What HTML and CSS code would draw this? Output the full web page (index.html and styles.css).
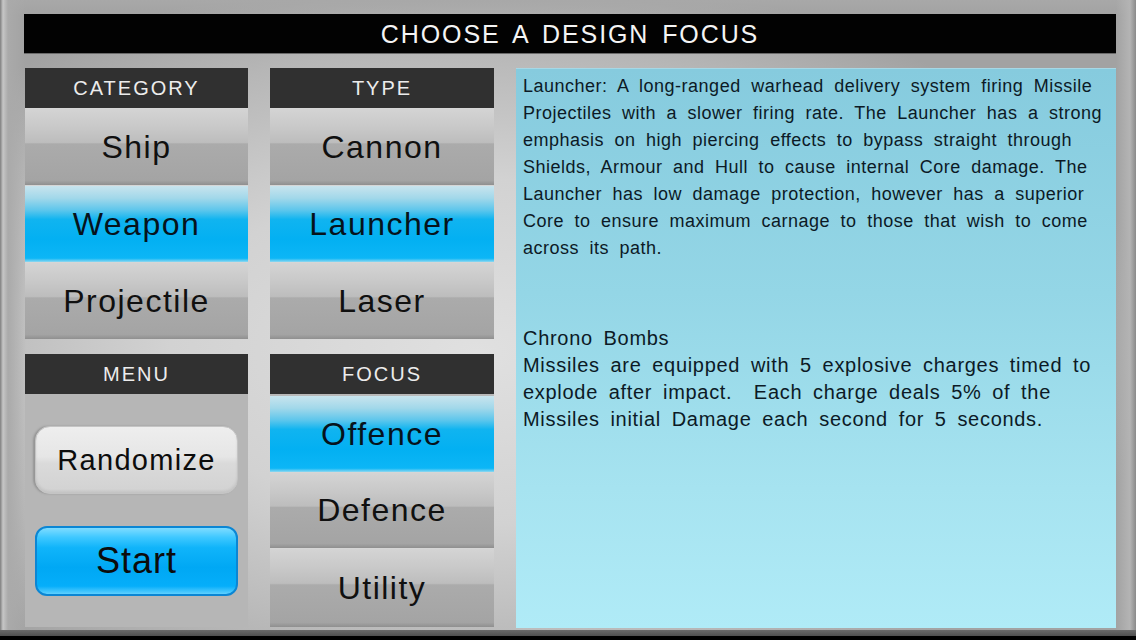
FILE: index.html
```html
<!DOCTYPE html>
<html>
<head>
<meta charset="utf-8">
<link rel="stylesheet" href="styles.css">
</head>
<body>
<div class="screen">
  <div class="title">CHOOSE A DESIGN FOCUS</div>
  <div class="main">
    <div class="panel top-left">
      <div class="head">CATEGORY</div>
      <div class="item">Ship</div>
      <div class="item sel">Weapon</div>
      <div class="item">Projectile</div>
    </div>
    <div class="panel top-mid">
      <div class="head">TYPE</div>
      <div class="item">Cannon</div>
      <div class="item sel">Launcher</div>
      <div class="item">Laser</div>
    </div>
    <div class="desc">
      <div class="para first">
        <div class="ln">Launcher: A long-ranged warhead delivery system firing Missile</div>
        <div class="ln">Projectiles with a slower firing rate. The Launcher has a strong</div>
        <div class="ln">emphasis on high piercing effects to bypass straight through</div>
        <div class="ln">Shields, Armour and Hull to cause internal Core damage. The</div>
        <div class="ln">Launcher has low damage protection, however has a superior</div>
        <div class="ln">Core to ensure maximum carnage to those that wish to come</div>
        <div class="ln">across its path.</div>
      </div>
      <div class="para second">
        <div class="ln">Chrono Bombs</div>
        <div class="ln">Missiles are equipped with 5 explosive charges timed to</div>
        <div class="ln">explode after impact.&nbsp; Each charge deals 5% of the</div>
        <div class="ln">Missiles initial Damage each second for 5 seconds.</div>
      </div>
    </div>
    <div class="panel menu">
      <div class="head">MENU</div>
      <div class="menu-body">
        <div class="btn rand">Randomize</div>
        <div class="btn start">Start</div>
      </div>
    </div>
    <div class="panel focus">
      <div class="head">FOCUS</div>
      <div class="focus-list">
        <div class="item sel">Offence</div>
        <div class="item">Defence</div>
        <div class="item">Utility</div>
      </div>
    </div>
  </div>
  <div class="footer"></div>
</div>
</body>
</html>
```
FILE: styles.css
```css
html, body {
  margin: 0;
  padding: 0;
}
body {
  width: 1136px;
  height: 640px;
  overflow: hidden;
  font-family: "Liberation Sans", Arial, sans-serif;
}
.screen {
  width: 1136px;
  height: 640px;
  box-sizing: border-box;
  padding: 14px 20px 0 24px;
  display: flex;
  flex-direction: column;
  background:
    linear-gradient(to right, #7e7e7e 0, #c6c6c6 3px, #aaaaaa 8px, rgba(168,168,168,0) 26px),
    linear-gradient(to left, #8a8a8a 0, #b4b4b4 6px, rgba(170,170,170,0) 20px),
    linear-gradient(to bottom, #a8a8a8 0, rgba(168,168,168,0) 16px),
    radial-gradient(ellipse 60% 60% at 42% 55%, #e0e0e0 0%, #d2d2d2 45%, #b6b6b6 80%, #a2a2a2 100%);
}
.title {
  height: 39px;
  background: #020202;
  color: #f4f4f4;
  font-size: 25px;
  letter-spacing: 1.9px;
  word-spacing: 4px;
  display: flex;
  align-items: center;
  justify-content: center;
  padding-top: 2px;
  box-sizing: border-box;
  box-shadow: 0 1px 0 #6a6a6a;
}
.main {
  margin-top: 15px;
  margin-left: 1px;
  display: grid;
  grid-template-columns: 223px 224px 600px;
  grid-template-rows: 271px 273px;
  column-gap: 22px;
  row-gap: 15px;
}
.panel {
  display: flex;
  flex-direction: column;
}
.head {
  height: 40px;
  flex: none;
  background: #303030;
  color: #ececec;
  font-size: 20px;
  letter-spacing: 2px;
  display: flex;
  align-items: center;
  justify-content: center;
  padding-top: 1px;
  box-sizing: border-box;
}
.item {
  height: 77px;
  box-sizing: border-box;
  border-top: 1px solid #d6d6d6;
  display: flex;
  align-items: center;
  justify-content: center;
  font-size: 32px;
  letter-spacing: 1.5px;
  color: #101010;
  background: linear-gradient(to bottom, #d4d4d4 0%, #c8c8c8 25%, #bdbdbd 44%, #ababab 46%, #a4a4a4 94%, #8f8f8f 100%);
}
.item.sel {
  background: linear-gradient(to bottom, #c8e4ee 0%, #a2d8ea 16%, #5cc6ec 32%, #10b4f0 44%, #03b0f2 70%, #0cb6f6 95%, #8ed8f0 100%);
  color: #06131c;
}
.desc {
  grid-column: 3;
  grid-row: 1 / span 2;
  background: linear-gradient(to bottom, #86cbde 0%, #94d6e6 40%, #a6e3f0 75%, #b0ebf7 100%);
  padding: 4px 6px 0 7px;
  box-sizing: border-box;
  border-top: 1px solid #a6d8e6;
  color: #0c1a26;
  line-height: 27px;
  height: 560px;
}
.ln {
  white-space: nowrap;
}
.para.first {
  font-size: 18px;
  letter-spacing: 0.5px;
  word-spacing: 5px;
}
.para.second {
  margin-top: 63px;
  font-size: 20px;
  letter-spacing: 0.7px;
  word-spacing: 4.5px;
}
.menu {
  grid-column: 1;
  grid-row: 2;
}
.focus {
  grid-column: 2;
  grid-row: 2;
}
.menu-body {
  flex: 1;
  background: #b6b6b6;
  padding: 32px 10px 0 10px;
  display: flex;
  flex-direction: column;
  gap: 32px;
}
.btn {
  display: flex;
  align-items: center;
  justify-content: center;
  box-sizing: border-box;
  color: #0c0c0c;
}
.btn.rand {
  height: 68px;
  border-radius: 15px;
  border: 1px solid #c4c4c4;
  background: linear-gradient(to bottom, #eeeeee 0%, #e6e6e6 45%, #dadada 55%, #d2d2d2 100%);
  box-shadow: inset 0 -2px 3px rgba(0,0,0,0.08), -2px 0 2px rgba(90,90,90,0.35);
  font-size: 29px;
  letter-spacing: 1.3px;
}
.btn.start {
  height: 70px;
  border-radius: 12px;
  border: 2px solid #0b86d4;
  background: linear-gradient(to bottom, #7fdcff 0%, #3fc8ff 14%, #10b4fa 30%, #00a8f4 60%, #05aefa 88%, #5fd0ff 100%);
  font-size: 36px;
  letter-spacing: 1px;
}
.focus-list {
  flex: 1;
  background: #b8b8b8;
  padding-top: 2px;
  display: flex;
  flex-direction: column;
}
.focus-list .item {
  height: 76px;
}
.focus-list .item:first-child {
  border-top: none;
}
.focus-list .item:last-child {
  flex: 1;
}
.footer {
  margin-top: auto;
  margin-left: -24px;
  margin-right: -20px;
  height: 10px;
  background: linear-gradient(to bottom, #6a6a6a 0, #505050 60%, #000 60%, #000 100%);
}
```
